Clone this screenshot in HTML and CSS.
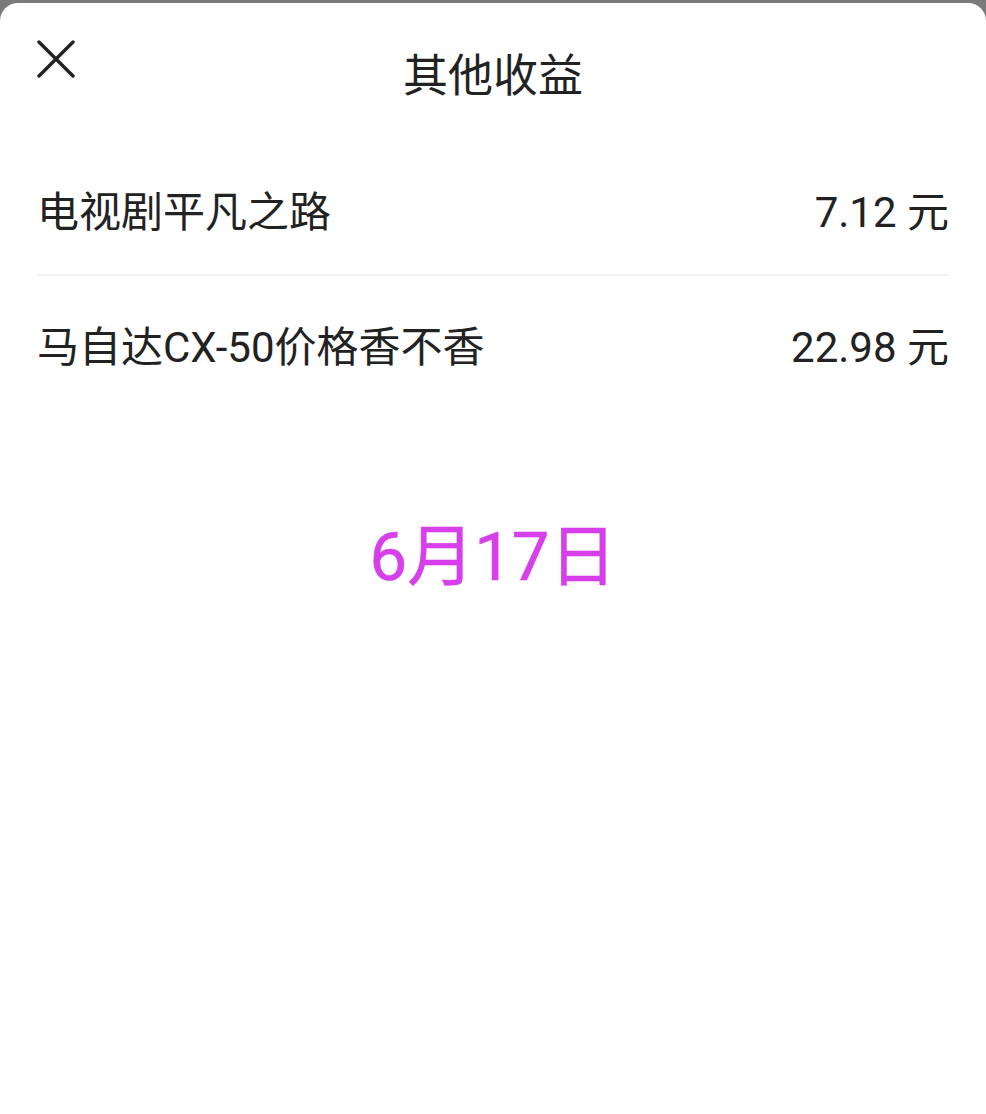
FILE: index.html
```html
<!DOCTYPE html>
<html lang="zh-CN">
	<head>
		<title>其他收益</title>
		<meta charset="utf-8" />
		<link rel="stylesheet" href="styles.css">
	</head>
	<body>
		<div class="sheet">
			<div class="head">
				<div class="close">
					<svg width="38" height="38" viewBox="0 0 38 38"><path d="M2 2L36 36M36 2L2 36" stroke="#222" stroke-width="3.4" stroke-linecap="round" fill="none"/></svg>
				</div>
				<div class="title">其他收益</div>
				<div></div>
			</div>
			<div class="list">
				<div class="row"><span class="name">电视剧平凡之路</span><span class="amount">7.12 元</span></div>
				<div class="row last"><span class="name">马自达CX-50价格香不香</span><span class="amount">22.98 元</span></div>
			</div>
			<div class="date">6月17日</div>
		</div>
	</body>
</html>
```

FILE: styles.css
```css
body {margin: 0; background: #7a7a7a; font-family: Roboto, "Noto Sans CJK SC", sans-serif; color: #222;}
.sheet {margin-top: 3px; height: 1111px; background: #fff; border-radius: 18px 18px 0 0; overflow: hidden;}
.head {display: grid; grid-template-columns: 1fr auto 1fr; align-items: start; height: 139px; box-sizing: border-box; padding: 37px 37px 0;}
.close {width: 38px; height: 38px;}
.close svg {display: block;}
.title {font-size: 45px; line-height: 60px; margin-top: 7px;}
.list {padding: 0 37px;}
.row {display: flex; justify-content: space-between; align-items: center; height: 134px; box-sizing: border-box; border-bottom: 2px solid #f3f3f3; font-size: 42px;}
.row.last {border-bottom: none;}
.amount {margin-right: 0;}
.date {margin-top: 107px; text-align: center; font-size: 67px; line-height: 80px; font-weight: 400; -webkit-text-stroke: 0.5px #d63fea; color: #d63fea;}
```
